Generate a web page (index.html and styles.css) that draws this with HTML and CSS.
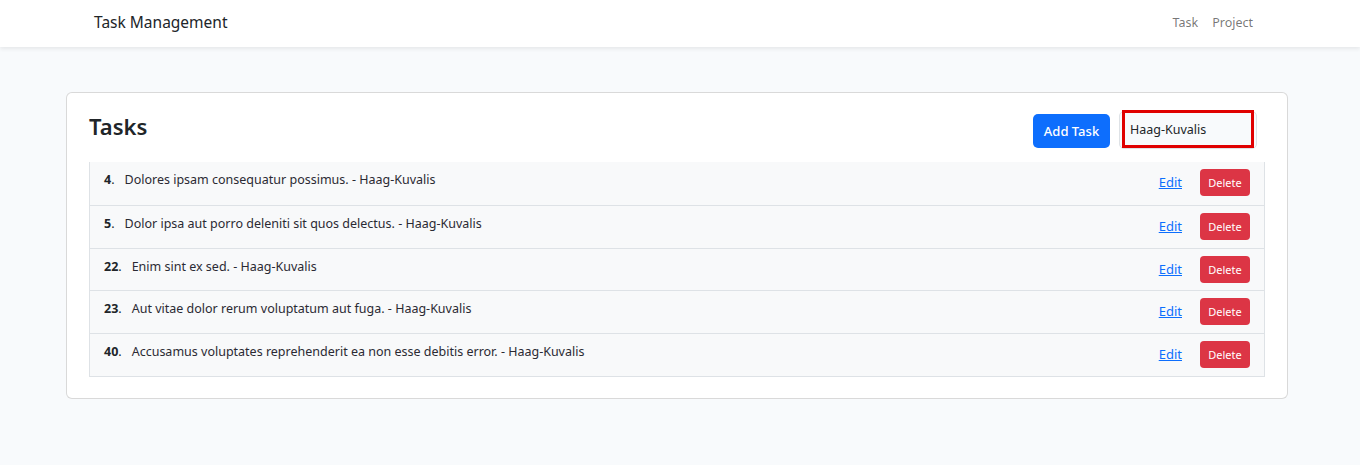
FILE: index.html
```html
<!DOCTYPE html>
<html lang="en">
<head>
<meta charset="utf-8">
<title>Task Management</title>
<link rel="stylesheet" href="styles.css">
</head>
<body>
<nav class="navbar">
  <a class="brand" href="#">Task Management</a>
  <div class="nav-links">
    <a href="#" class="nav-link">Task</a>
    <a href="#" class="nav-link">Project</a>
  </div>
</nav>
<main class="main">
  <section class="card">
    <div class="card-head">
      <h1 class="title">Tasks</h1>
      <div class="actions">
        <button class="btn btn-primary">Add Task</button>
        <span class="search-wrap"><input class="search" type="text" value="Haag-Kuvalis"></span>
      </div>
    </div>
    <ul class="list">
      <li class="row"><div class="text"><b>4</b>.<span class="desc">Dolores ipsam consequatur possimus. - Haag-Kuvalis</span></div><div class="row-actions"><a href="#" class="edit">Edit</a><button class="btn btn-danger">Delete</button></div></li>
      <li class="row"><div class="text"><b>5</b>.<span class="desc">Dolor ipsa aut porro deleniti sit quos delectus. - Haag-Kuvalis</span></div><div class="row-actions"><a href="#" class="edit">Edit</a><button class="btn btn-danger">Delete</button></div></li>
      <li class="row"><div class="text"><b>22</b>.<span class="desc">Enim sint ex sed. - Haag-Kuvalis</span></div><div class="row-actions"><a href="#" class="edit">Edit</a><button class="btn btn-danger">Delete</button></div></li>
      <li class="row"><div class="text"><b>23</b>.<span class="desc">Aut vitae dolor rerum voluptatum aut fuga. - Haag-Kuvalis</span></div><div class="row-actions"><a href="#" class="edit">Edit</a><button class="btn btn-danger">Delete</button></div></li>
      <li class="row"><div class="text"><b>40</b>.<span class="desc">Accusamus voluptates reprehenderit ea non esse debitis error. - Haag-Kuvalis</span></div><div class="row-actions"><a href="#" class="edit">Edit</a><button class="btn btn-danger">Delete</button></div></li>
    </ul>
  </section>
</main>
</body>
</html>
```

FILE: styles.css
```css
* { box-sizing: border-box; }
html, body { margin: 0; padding: 0; }
body {
  background: #f8fafc;
  font-family: "Noto Sans", "Open Sans", sans-serif;
  color: #212529;
  font-size: 12.5px;
  height: 465px;
  overflow: hidden;
}
.navbar {
  height: 47px;
  background: #fff;
  box-shadow: 0 2px 4px rgba(0,0,0,0.075);
  display: flex;
  align-items: center;
  justify-content: space-between;
  padding: 0 107px 0 94px;
}
.brand {
  color: #212529;
  text-decoration: none;
  font-size: 15.5px;
  padding-bottom: 3px;
}
.nav-links { display: flex; gap: 14px; padding-bottom: 3px; }
.nav-link {
  color: rgba(0,0,0,0.55);
  text-decoration: none;
  font-size: 12.5px;
}
.main { padding: 45px 0 0 66px; }
.card {
  width: 1222px;
  background: #fff;
  border: 1px solid rgba(0,0,0,0.15);
  border-radius: 6px;
  padding: 16px 22px 21px 22px;
}
.card-head {
  display: flex;
  align-items: center;
  justify-content: space-between;
  height: 38px;
  margin-bottom: 15px;
}
.title {
  margin: 0;
  font-size: 22px;
  font-weight: 600;
  padding-bottom: 4px;
}
.actions {
  display: flex;
  align-items: center;
  gap: 9px;
  padding-right: 8px;
  margin-top: 5px;
}
.btn {
  font-family: inherit;
  border: none;
  color: #fff;
  cursor: pointer;
}
.btn-primary {
  background: #0d6efd;
  height: 34px;
  width: 77px;
  border-radius: 5px;
  font-size: 13px;
  font-weight: 500;
  padding: 0;
}
.search-wrap { position: relative; display: block; margin-top: -2px; }
.search-wrap::after {
  content: "";
  position: absolute;
  top: -1px;
  bottom: 1px;
  left: 3px;
  right: 3px;
  border: 3px solid #e00000;
  pointer-events: none;
}
.search {
  display: block;
  width: 138px;
  height: 38px;
  background: #f8fafc;
  border: 1px solid #dee2e6;
  border-radius: 5px;
  font-family: inherit;
  font-size: 12.5px;
  color: #212529;
  padding: 0 10px;
  outline: none;
}
.list {
  list-style: none;
  margin: 0;
  padding: 0;
  border: 1px solid #dee2e6;
  border-top: none;
  background: #f8f9fa;
}
.row {
  display: flex;
  justify-content: space-between;
  height: 42.8px;
  padding: 7px 14px 0 14px;
  border-top: 1px solid #dee2e6;
}
.row:first-child { border-top: none; }
.text { padding-top: 2px; }
.text b { font-weight: 700; }
.desc { margin-left: 10px; color: #2b2a33; }
.row-actions { display: flex; align-items: flex-start; gap: 18px; }
.edit {
  color: #0d6efd;
  font-size: 13px;
  margin-top: 4px;
}
.btn-danger {
  background: #dc3545;
  width: 50px;
  height: 27px;
  border-radius: 4px;
  font-size: 11px;
  padding: 0;
}
```
